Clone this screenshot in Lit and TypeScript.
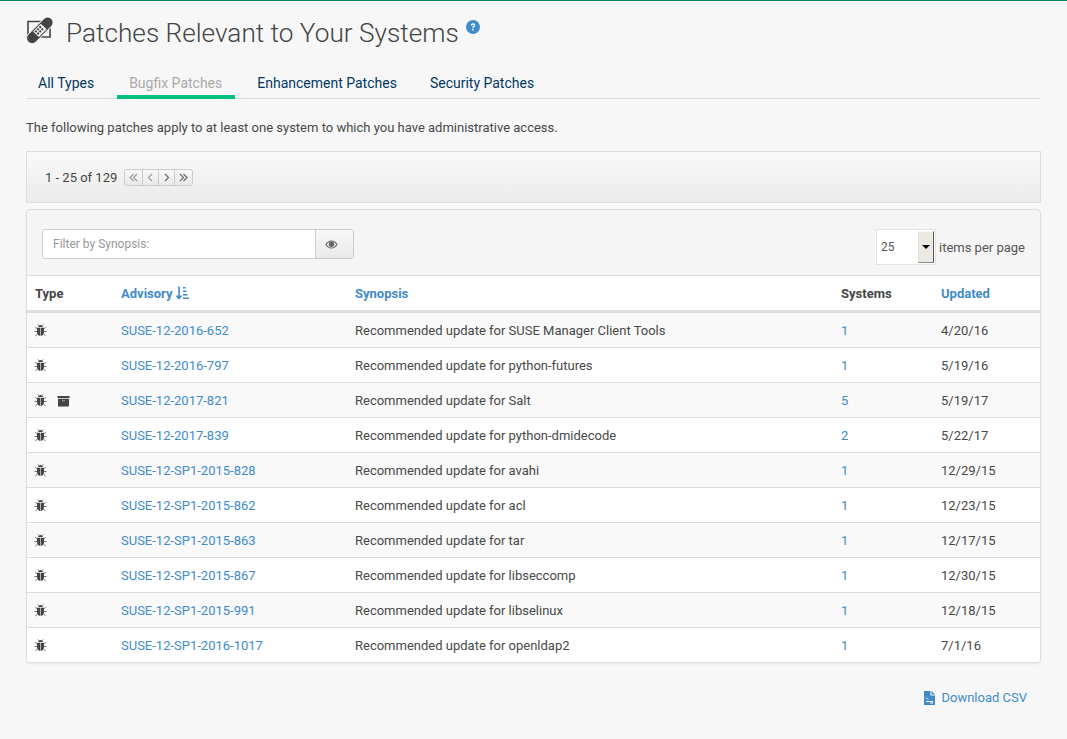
import { LitElement, css, html, svg } from 'lit';
import { customElement } from 'lit/decorators.js';

const rows = [
    { id: 'SUSE-12-2016-652', synopsis: 'Recommended update for SUSE Manager Client Tools', systems: 1, updated: '4/20/16' },
    { id: 'SUSE-12-2016-797', synopsis: 'Recommended update for python-futures', systems: 1, updated: '5/19/16' },
    { id: 'SUSE-12-2017-821', synopsis: 'Recommended update for Salt', systems: 5, updated: '5/19/17', archive: true },
    { id: 'SUSE-12-2017-839', synopsis: 'Recommended update for python-dmidecode', systems: 2, updated: '5/22/17' },
    { id: 'SUSE-12-SP1-2015-828', synopsis: 'Recommended update for avahi', systems: 1, updated: '12/29/15' },
    { id: 'SUSE-12-SP1-2015-862', synopsis: 'Recommended update for acl', systems: 1, updated: '12/23/15' },
    { id: 'SUSE-12-SP1-2015-863', synopsis: 'Recommended update for tar', systems: 1, updated: '12/17/15' },
    { id: 'SUSE-12-SP1-2015-867', synopsis: 'Recommended update for libseccomp', systems: 1, updated: '12/30/15' },
    { id: 'SUSE-12-SP1-2015-991', synopsis: 'Recommended update for libselinux', systems: 1, updated: '12/18/15' },
    { id: 'SUSE-12-SP1-2016-1017', synopsis: 'Recommended update for openldap2', systems: 1, updated: '7/1/16' },
];

const bugIcon = svg`<svg class="ic bug" width="13" height="13" viewBox="0 0 13 13">
    <path d="M4.200 3C4.200 1.700 5.200 1 6.500 1S8.800 1.700 8.800 3Z" fill="#444"/>
    <path d="M3 3.800H6.200V12C4.200 11.800 3 10.200 3 8ZM6.800 3.800H10V8C10 10.200 8.800 11.800 6.800 12Z" fill="#444"/>
    <path d="M3.300 5 1.200 3.200M9.700 5 11.800 3.200M3 7.500H.5M10 7.500H12.500M3.500 10 1.300 12M9.500 10 11.700 12M4.500 1.500 3.800 .4M8.500 1.500 9.200 .4" stroke="#666" stroke-width=".9" fill="none"/>
</svg>`;

const archiveIcon = svg`<svg class="ic" width="13" height="12" viewBox="0 0 13 12">
    <path d="M.5 1H12.500V3.200H.5ZM1 3.900H12V11.500H1Z" fill="#444"/>
    <rect x="5" y="5.200" width="3" height="1.200" fill="#999"/>
</svg>`;

@customElement('app-root')
export class AppRoot extends LitElement {
    static styles = css`
        :host {
            display: block;
            min-height: 739px;
            box-sizing: border-box;
            background: #f7f7f7;
            border-top: 1px solid #00875f;
            padding: 0 26px;
            font-family: Roboto, "Liberation Sans", sans-serif;
            font-size: 13px;
            color: #444;
        }

        a { color: #428bca; text-decoration: none; }

        .title {
            display: flex;
            align-items: flex-start;
            height: 65px;
            padding-top: 14px;
            box-sizing: border-box;
        }

        .title h1 {
            margin: 0 7px 0 12px;
            font-size: 26.2px;
            font-weight: 300;
            line-height: 36px;
            color: #444;
        }

        .help { margin-top: 5px; }

        .tabs {
            display: flex;
            height: 32px;
            border-bottom: 1px solid #ddd;
            font-size: 14px;
        }

        .tab {
            box-sizing: border-box;
            height: 32px;
            padding: 9px 12px 0;
            margin-right: 11px;
            line-height: 16px;
            color: #003764;
        }

        .tab:nth-child(3) { margin-right: 9px; }

        .tab.active {
            color: #aaa;
            border-bottom: 4px solid #00c081;
            height: 33px;
            padding-right: 13px;
            margin-right: 10px;
        }

        .intro { margin: 21px 0 15px; line-height: 16px; color: #484848; }

        .pager {
            display: flex;
            align-items: center;
            height: 52px;
            box-sizing: border-box;
            padding-left: 18px;
            border: 1px solid #ddd;
            background: linear-gradient(#f9f9f9, #ebebeb);
            margin-bottom: 6px;
        }

        .pages {
            display: flex;
            margin-left: 7px;
            height: 17px;
            box-sizing: border-box;
            border: 1px solid #ccc;
            border-radius: 3px;
            background: linear-gradient(#f8f8f8, #e9e9e9);
        }

        .pages span {
            display: flex;
            align-items: center;
            justify-content: center;
            width: 15px;
            border-left: 1px solid #ccc;
        }

        .pages span:first-child { border-left: 0; width: 17px; }

        .pages span:last-child { width: 17px; }

        .card {
            border: 1px solid #ddd;
            border-radius: 4px;
            background: #f5f5f5;
            box-shadow: 0 1px 2px rgba(0, 0, 0, .08);
            overflow: hidden;
        }

        .tools {
            display: flex;
            justify-content: space-between;
            align-items: flex-start;
            height: 65px;
            box-sizing: border-box;
            padding: 19px 15px 0;
        }

        .filter {
            display: flex;
            height: 30px;
            box-sizing: border-box;
            border: 1px solid #ccc;
            border-radius: 3px;
            overflow: hidden;
        }

        .filter .field {
            width: 262px;
            padding-left: 10px;
            background: #fff;
            color: #999;
            font-size: 12px;
            line-height: 28px;
        }

        .filter .eye {
            display: flex;
            align-items: center;
            box-sizing: border-box;
            width: 38px;
            padding-left: 9px;
            border-left: 1px solid #ccc;
            background: linear-gradient(#f8f8f8, #e9e9e9);
        }

        .per-page { display: flex; align-items: center; color: #555; }

        .select {
            display: flex;
            justify-content: space-between;
            width: 60px;
            height: 36px;
            box-sizing: border-box;
            border: 1px solid #e2e2e2;
            background: #fff;
            margin-right: 3px;
            padding: 1px;
        }

        .select b { font-weight: 400; padding-left: 3px; line-height: 32px; font-size: 12px; }

        .select i {
            display: flex;
            align-items: center;
            justify-content: center;
            width: 16px;
            box-sizing: border-box;
            background: #ece9e4;
            border: 1px solid;
            border-color: #f8f8f8 #555 #888 #ddd;
        }

        .select i::after {
            content: "";
            border: 4px solid transparent;
            border-top: 4px solid #000;
            border-bottom: 0;
        }

        table { width: 100%; border-collapse: collapse; table-layout: fixed; background: #fff; }

        th {
            height: 34px;
            padding: 0 0 0 8px;
            text-align: left;
            font-size: 13px;
            font-weight: 700;
            color: #444;
            border-top: 1px solid #ddd;
            border-bottom: 3px solid #ddd;
        }

        th a { font-weight: 700; }

        td {
            height: 34px;
            padding: 0 0 0 8px;
            border-bottom: 1px solid #ddd;
            color: #484848;
        }

        tr:last-child td { border-bottom: 0; }

        tbody tr:nth-child(odd) td { background: #f9f9f9; }

        .ic { vertical-align: -2px; }

        .bug { margin-left: -1px; }

        .ic + .ic { margin-left: 10px; }

        .csv {
            display: flex;
            justify-content: flex-end;
            align-items: center;
            gap: 6px;
            padding: 27px 14px 0 0;
            line-height: 16px;
        }
    `;

    protected render() {
        return html`
            <div class="title">
                <svg width="28" height="30" viewBox="0 0 28 30">
                    <path d="M2 6.500H24V22H2Z" fill="none" stroke="#444" stroke-width="1.600"/>
                    <g transform="rotate(-45 13.500 15)">
                        <rect x="-3" y="10" width="33" height="11" rx="5.500" fill="#444" stroke="#f7f7f7" stroke-width="1"/>
                        <rect x="8" y="11.500" width="11" height="8" fill="#f7f7f7"/>
                        <path d="M9 12.500h2v2h-2zM12 12.500h2v2h-2zM15 12.500h2v2h-2zM9 15.500h2v2h-2zM12 15.500h2v2h-2zM15 15.500h2v2h-2z" fill="#444"/>
                    </g>
                </svg>
                <h1>Patches Relevant to Your Systems</h1>
                <svg class="help" width="14" height="14" viewBox="0 0 14 14">
                    <circle cx="7" cy="7" r="7" fill="#428bca"/>
                    <path d="M4.800 5.300C5 3.900 6 3.300 7.100 3.300 8.400 3.300 9.300 4.100 9.300 5.200 9.300 6.600 7.600 6.600 7.600 8H6.300C6.300 6 7.900 6 7.900 5.200 7.900 4.800 7.500 4.500 7.100 4.500 6.600 4.500 6.200 4.900 6.100 5.500ZM6.300 8.800H7.700V10.400H6.300Z" fill="#fff"/>
                </svg>
            </div>

            <nav class="tabs">
                <a class="tab">All Types</a>
                <a class="tab active">Bugfix Patches</a>
                <a class="tab">Enhancement Patches</a>
                <a class="tab">Security Patches</a>
            </nav>

            <p class="intro">The following patches apply to at least one system to which you have administrative access.</p>

            <div class="pager">
                1 - 25 of 129
                <div class="pages">
                    <span><svg width="9" height="9" viewBox="0 0 9 9"><path d="M4.500 1 1 4.500 4.500 8M8 1 4.500 4.500 8 8" fill="none" stroke="#999" stroke-width="1.100"/></svg></span>
                    <span><svg width="9" height="9" viewBox="0 0 9 9"><path d="M6 1 2.500 4.500 6 8" fill="none" stroke="#999" stroke-width="1.100"/></svg></span>
                    <span><svg width="9" height="9" viewBox="0 0 9 9"><path d="M3 1 6.500 4.500 3 8" fill="none" stroke="#666" stroke-width="1.100"/></svg></span>
                    <span><svg width="9" height="9" viewBox="0 0 9 9"><path d="M1 1 4.500 4.500 1 8M4.500 1 8 4.500 4.500 8" fill="none" stroke="#666" stroke-width="1.100"/></svg></span>
                </div>
            </div>

            <div class="card">
                <div class="tools">
                    <div class="filter">
                        <div class="field">Filter by Synopsis:</div>
                        <div class="eye">
                            <svg width="13" height="9" viewBox="0 0 13 9">
                                <path d="M.3 4.500C2 1.700 4 .4 6.500 .4S11 1.700 12.700 4.500C11 7.300 9 8.600 6.500 8.600S2 7.300 .3 4.500Z" fill="#666"/>
                                <path d="M1.600 4.500C3 2.500 4.500 1.400 6.500 1.400S10 2.500 11.400 4.500C10 6.500 8.500 7.600 6.500 7.600S3 6.500 1.600 4.500Z" fill="#eee"/>
                                <circle cx="6.500" cy="4.300" r="2.700" fill="#666"/>
                            </svg>
                        </div>
                    </div>
                    <div class="per-page">
                        <div class="select"><b>25</b><i></i></div>
                        items per page
                    </div>
                </div>
                <table>
                    <colgroup><col style="width:86px"><col style="width:234px"><col style="width:486px"><col style="width:100px"><col></colgroup>
                    <thead>
                        <tr>
                            <th>Type</th>
                            <th><a>Advisory
                                <svg class="ic" width="13" height="14" viewBox="0 0 13 14">
                                    <path d="M3 .5V12M.5 9.500 3 12.500 5.500 9.500" fill="none" stroke="#428bca" stroke-width="1.600"/>
                                    <path d="M7 1h2.500v1.500H7zM7 4.500h3.500V6H7zM7 8h4.500v1.500H7zM7 11.500h6V13H7z" fill="#428bca"/>
                                </svg>
                            </a></th>
                            <th><a>Synopsis</a></th>
                            <th>Systems</th>
                            <th><a>Updated</a></th>
                        </tr>
                    </thead>
                    <tbody>
                        ${rows.map(r => html`
                            <tr>
                                <td>${bugIcon}${r.archive ? archiveIcon : ''}</td>
                                <td><a>${r.id}</a></td>
                                <td>${r.synopsis}</td>
                                <td><a>${r.systems}</a></td>
                                <td>${r.updated}</td>
                            </tr>
                        `)}
                    </tbody>
                </table>
            </div>

            <div class="csv">
                <svg width="11" height="14" viewBox="0 0 11 14">
                    <path d="M0 0H6.500V4.500H11V14H0ZM7.500 0 11 3.500H7.500Z" fill="#428bca"/>
                    <path d="M2 6.500 4 8.500M2 10.500H9M6 12H9" stroke="#f7f7f7" stroke-width="1" fill="none"/>
                </svg>
                <a>Download CSV</a>
            </div>
        `;
    }
}
